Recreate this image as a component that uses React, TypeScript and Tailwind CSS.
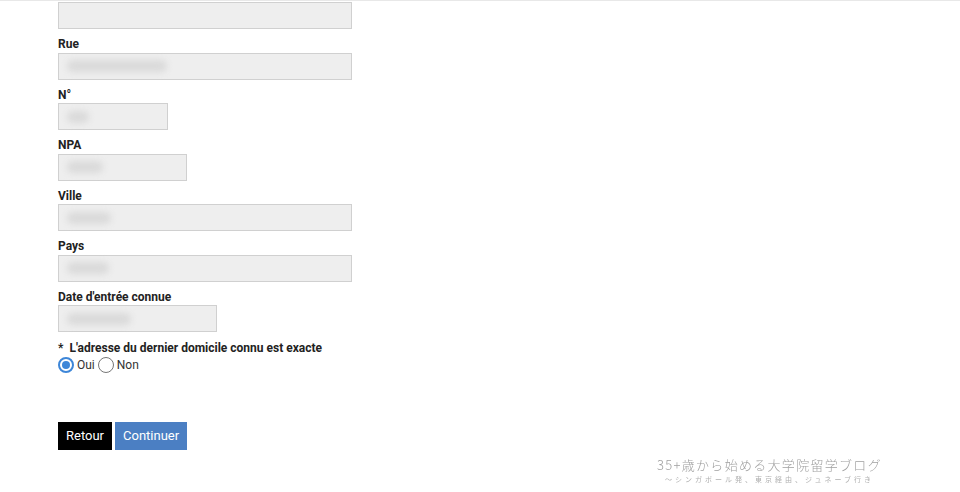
import React from "react";

type Field = { label: string; width: string; blur: string };

const fields: Field[] = [
  { label: "Rue", width: "w-[294px]", blur: "w-[100px]" },
  { label: "N°", width: "w-[110px]", blur: "w-[22px]" },
  { label: "NPA", width: "w-[129px]", blur: "w-[36px]" },
  { label: "Ville", width: "w-[294px]", blur: "w-[44px]" },
  { label: "Pays", width: "w-[294px]", blur: "w-[42px]" },
  { label: "Date d'entrée connue", width: "w-[159px]", blur: "w-[64px]" },
];

function Input({ width, blur }: { width: string; blur?: string }) {
  return (
    <div className={`${width} h-[27px] bg-[#eeeeee] border border-[#d0d0d0] flex items-center pl-[8px]`}>
      {blur && <div className={`${blur} h-[12px] rounded-full bg-[#dadada] blur-[3px]`} />}
    </div>
  );
}

function Radio({ checked }: { checked?: boolean }) {
  return (
    <span
      className={`w-[16px] h-[16px] rounded-full border flex items-center justify-center bg-white ${
        checked ? "border-[#3d86d8] border-2" : "border-[#777777]"
      }`}
    >
      {checked && <span className="w-[8px] h-[8px] rounded-full bg-[#3d86d8]" />}
    </span>
  );
}

export default function App() {
  return (
    <div className="relative w-[960px] h-[492px] bg-white border-t border-[#e8e8e8] overflow-hidden text-[#222] font-['Roboto','Liberation_Sans',sans-serif]">
      <div className="pl-[58px] pt-[1px] flex flex-col">
        <Input width="w-[294px]" />

        {fields.map((f) => (
          <div key={f.label} className="flex flex-col">
            <label className="mt-[7px] mb-[0.5px] text-[12px] leading-[16px] font-bold">{f.label}</label>
            <Input width={f.width} blur={f.blur} />
          </div>
        ))}

        {/* Radio question */}
        <div className="mt-[8px] text-[12px] leading-[16px] font-bold flex gap-[6px]">
          <span>*</span>
          <span>L'adresse du dernier domicile connu est exacte</span>
        </div>
        <div className="mt-[1px] flex items-center text-[12px] leading-[16px] text-[#333]">
          <Radio checked />
          <span className="ml-[3px] mr-[3px]">Oui</span>
          <Radio />
          <span className="ml-[3px]">Non</span>
        </div>

        {/* Buttons */}
        <div className="mt-[49px] flex gap-[3px]">
          <button className="h-[28px] px-[8px] bg-black text-white text-[13px]">Retour</button>
          <button className="h-[28px] px-[8px] bg-[#4b7fc3] text-white text-[13px]">Continuer</button>
        </div>
      </div>

      {/* Watermark */}
      <div className="absolute left-[657px] top-[456px] flex flex-col items-center text-[#a0a0a0] font-['Noto_Sans_CJK_JP',sans-serif] blur-[0.4px]">
        <span className="text-[13px] leading-[16px] tracking-[1.3px] font-light">35+歳から始める大学院留学ブログ</span>
        <span className="mt-[2px] text-[7px] leading-[9px] tracking-[3px] text-[#b0b0b0]">〜シンガポール発、東京経由、ジュネーブ行き</span>
      </div>
    </div>
  );
}
